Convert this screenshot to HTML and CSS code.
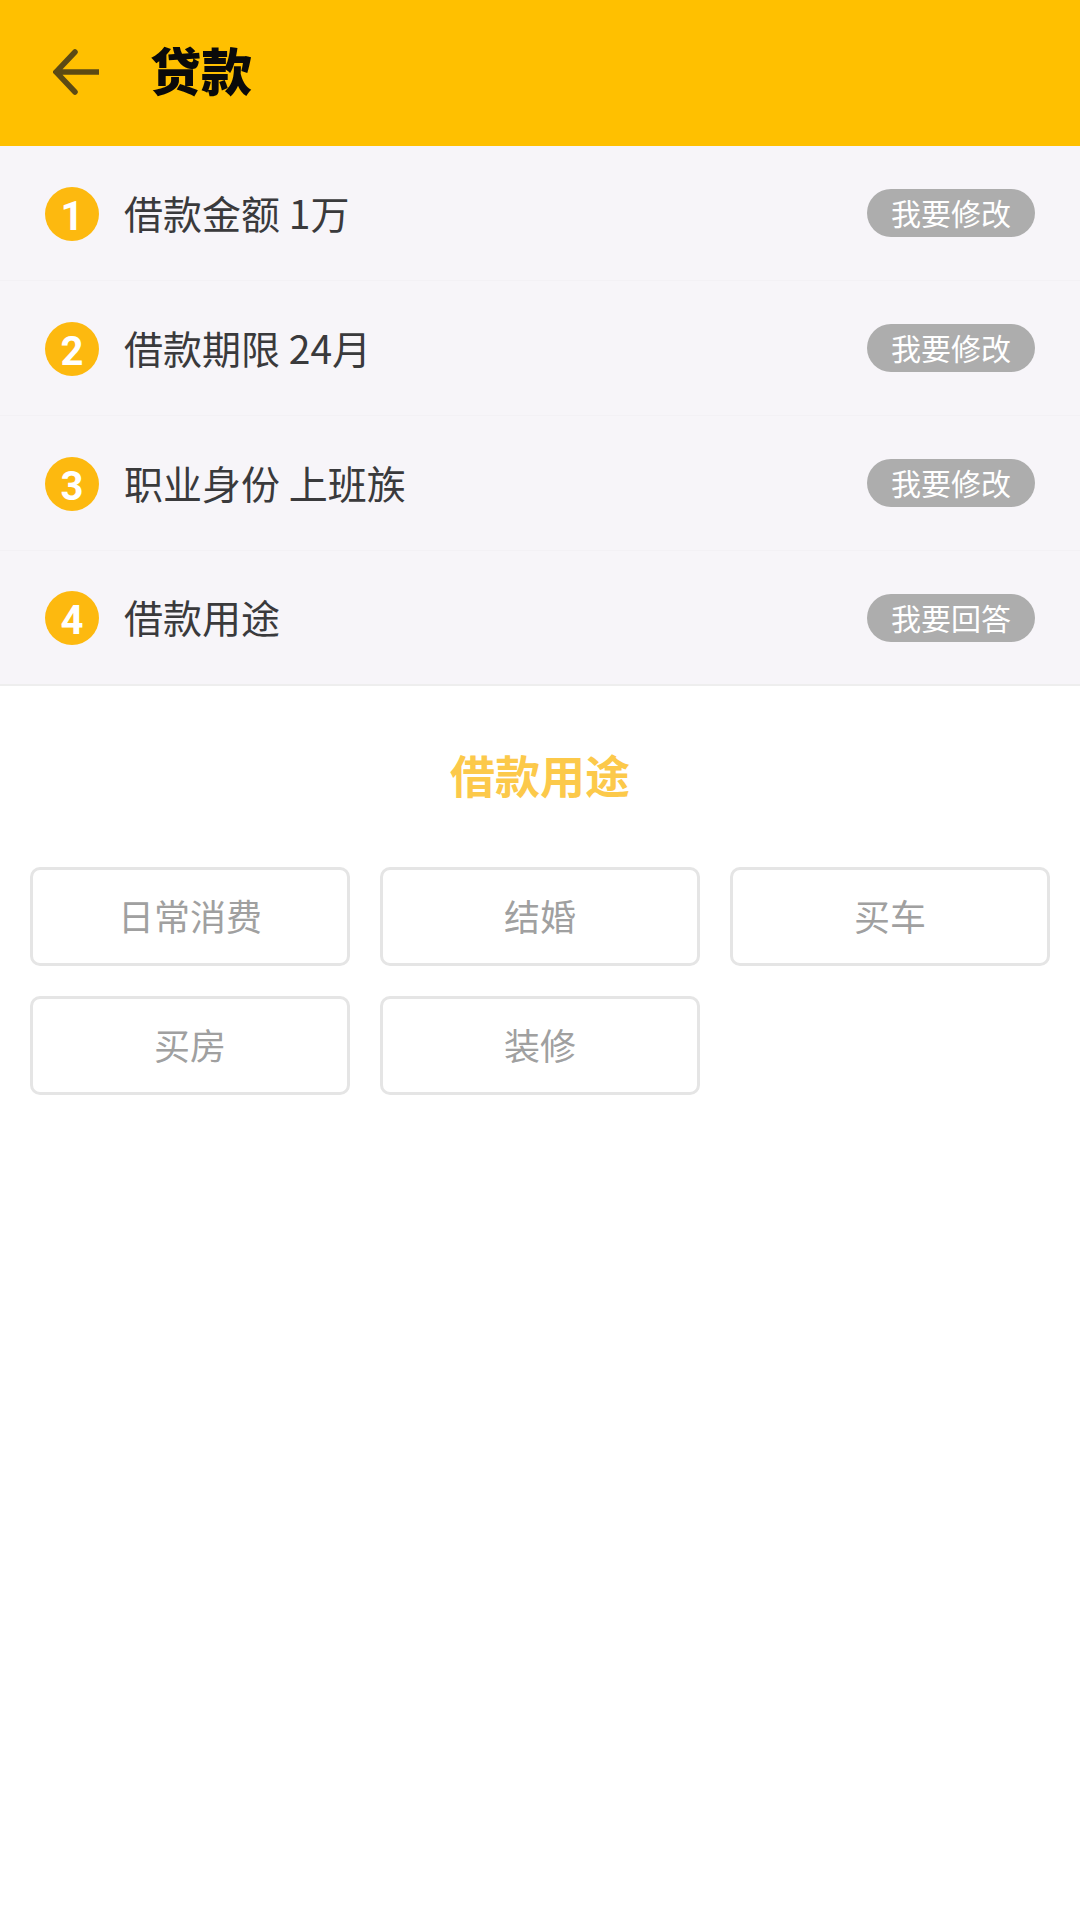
FILE: index.html
```html
<!DOCTYPE html>
<html lang="zh-CN">
  <head>
    <meta charset="UTF-8" />
    <meta name="viewport" content="width=device-width, initial-scale=1.0" />
    <title>贷款</title>
    <link rel="stylesheet" href="styles.css">
  </head>
  <body>
    <header class="top-bar">
      <svg class="back-icon" viewBox="0 0 46 46" width="46" height="46">
        <path d="M45 23H3M22 3L3 23l19 20" />
      </svg>
      <h1>贷款</h1>
    </header>
    <div class="steps">
      <div class="step">
        <span class="step-num">1</span>
        <span class="step-text">借款金额 1万</span>
        <span class="step-btn">我要修改</span>
      </div>
      <div class="step">
        <span class="step-num">2</span>
        <span class="step-text">借款期限 24月</span>
        <span class="step-btn">我要修改</span>
      </div>
      <div class="step">
        <span class="step-num">3</span>
        <span class="step-text">职业身份 上班族</span>
        <span class="step-btn">我要修改</span>
      </div>
      <div class="step">
        <span class="step-num">4</span>
        <span class="step-text">借款用途</span>
        <span class="step-btn">我要回答</span>
      </div>
    </div>
    <h2 class="section-title">借款用途</h2>
    <div class="options">
      <div class="option">日常消费</div>
      <div class="option">结婚</div>
      <div class="option">买车</div>
      <div class="option">买房</div>
      <div class="option">装修</div>
    </div>
  </body>
</html>
```

FILE: styles.css
```css
* {
  box-sizing: border-box;
}
body {
  margin: 0;
  min-height: 1920px;
  background-color: white;
  font-family: "Noto Sans CJK SC", "Noto Sans", sans-serif;
}
.top-bar {
  display: flex;
  align-items: center;
  height: 146px;
  padding: 0 0 2px 53px;
  background-color: #ffc000;
}
.back-icon {
  fill: none;
  stroke: #5c4a14;
  stroke-width: 5.5;
  stroke-linecap: round;
}
.top-bar h1 {
  margin: 0 0 6px 51px;
  font-size: 51px;
  font-weight: 900;
  line-height: 1;
  color: #0a0a0a;
}
.step {
  display: flex;
  align-items: center;
  height: 135px;
  padding: 0 45px;
  background-color: #f7f5f9;
  border-bottom: 1px solid #f3f1f5;
}
.step:last-child {
  border-bottom: 2px solid #eeeeee;
}
.step-num {
  display: flex;
  justify-content: center;
  align-items: center;
  width: 54px;
  height: 54px;
  margin-top: 1px;
  padding-top: 5px;
  border-radius: 50%;
  background-color: #fdb90f;
  color: white;
  font-family: Roboto, sans-serif;
  font-size: 40px;
  font-weight: 700;
}
.step-text {
  flex: 1;
  margin: 0 0 3px 25px;
  font-size: 39px;
  color: #3a3a3c;
}
.step-btn {
  display: flex;
  justify-content: center;
  align-items: center;
  width: 168px;
  height: 48px;
  padding-bottom: 2px;
  border-radius: 24px;
  background-color: #adadad;
  color: white;
  font-size: 30px;
}
.section-title {
  margin: 62px 0 0;
  height: 54px;
  line-height: 54px;
  text-align: center;
  font-size: 45px;
  font-weight: 700;
  color: #fcc94a;
}
.options {
  display: grid;
  grid-template-columns: repeat(3, 320px);
  gap: 30px;
  margin-top: 65px;
  padding-left: 30px;
}
.option {
  display: flex;
  justify-content: center;
  align-items: center;
  height: 99px;
  padding-bottom: 4px;
  border: 3px solid #e5e5e5;
  border-radius: 10px;
  font-size: 36px;
  color: #a0a0a0;
}
```
